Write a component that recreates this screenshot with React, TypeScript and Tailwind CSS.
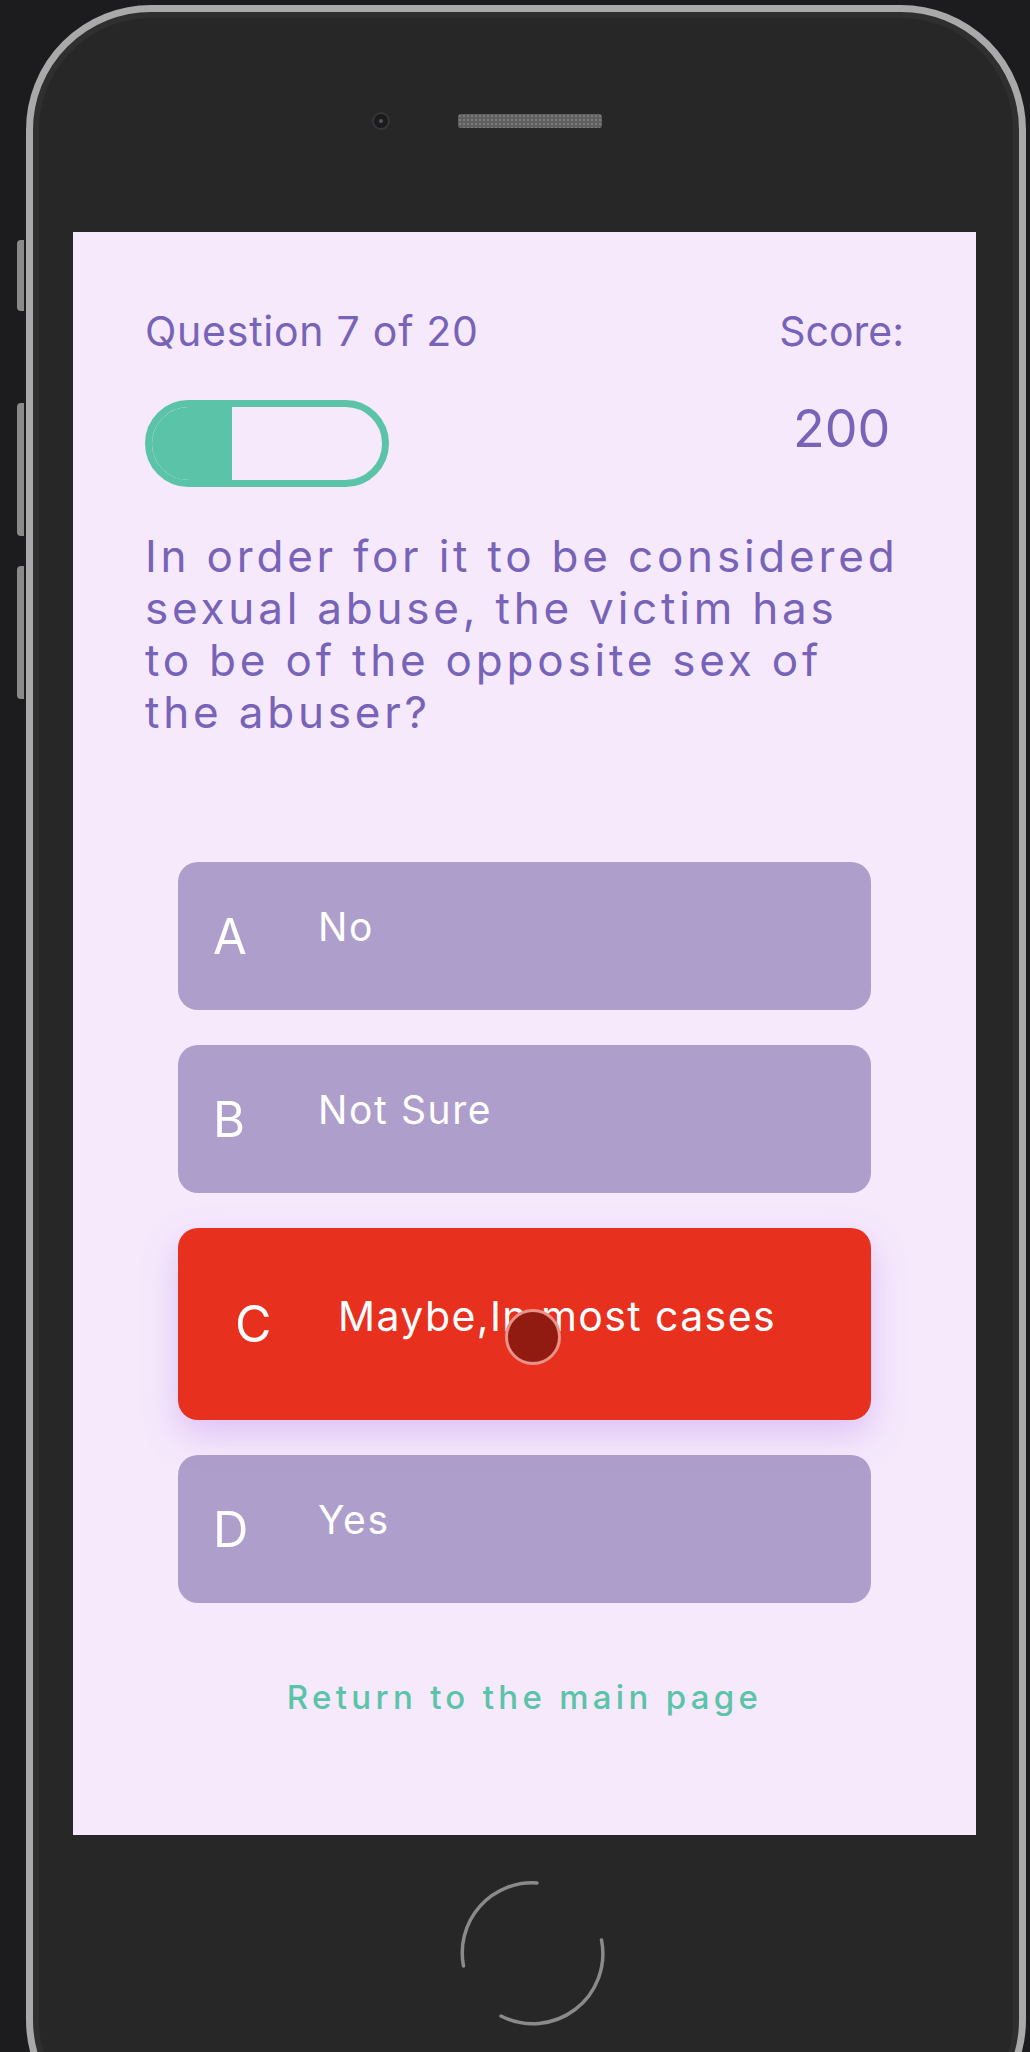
import React from "react";

const options = [
  { letter: "A", text: "No" },
  { letter: "B", text: "Not Sure" },
  { letter: "C", text: "Maybe,In most cases", selected: true },
  { letter: "D", text: "Yes" },
];

function HomeButton() {
  return (
    <svg width="150" height="150" viewBox="0 0 150 150" fill="none">
      <path d="M80 5 A70 70 0 0 0 6.5 88" stroke="#8a8a8a" strokeWidth="3.5" strokeLinecap="round" />
      <path d="M144.5 62 A70 70 0 0 1 44 138" stroke="#8a8a8a" strokeWidth="3.5" strokeLinecap="round" />
    </svg>
  );
}

function OptionCard({ letter, text, selected }: { letter: string; text: string; selected?: boolean }) {
  if (selected) {
    return (
      <div className="relative flex h-[192px] items-center rounded-[20px] bg-[#e8301f] pl-[57px] shadow-[0_14px_34px_rgba(178,120,235,0.35)]">
        <span className="w-[103px] text-[50px] leading-none text-white">{letter}</span>
        <span className="mb-[16px] text-[41px] leading-none tracking-[1.4px] text-white">{text}</span>
        {/* touch indicator */}
        <div className="absolute left-[327px] top-[81px] h-[56px] w-[56px] rounded-full border-[3px] border-[#e9928a] bg-[#921b11]" />
      </div>
    );
  }
  return (
    <div className="flex h-[148px] items-center rounded-[20px] bg-[#ae9ecb] pl-[35px]">
      <span className="w-[105px] text-[49px] leading-none text-white">{letter}</span>
      <span className="mb-[19px] text-[39px] leading-none tracking-[1.6px] text-white">{text}</span>
    </div>
  );
}

export default function App() {
  return (
    <div className="relative h-[2052px] w-[1030px] overflow-hidden bg-[#1c1c1e] pl-[26px] pt-[5px] font-['Inter',sans-serif]">
      {/* side buttons */}
      <div className="absolute left-[17px] top-[240px] h-[71px] w-[7px] rounded-l-sm bg-[#8a8a8a]" />
      <div className="absolute left-[17px] top-[403px] h-[133px] w-[7px] rounded-l-sm bg-[#8a8a8a]" />
      <div className="absolute left-[17px] top-[566px] h-[133px] w-[7px] rounded-l-sm bg-[#8a8a8a]" />

      <div className="flex h-[2140px] w-[1000px] flex-col rounded-[125px] border-[7px] border-[#a9a9a9] bg-[#272727] shadow-[inset_0_0_0_6px_#2f2f2f]">
        {/* top bezel */}
        <div className="flex h-[220px] items-center gap-[70px] pb-[2px] pl-[341px]">
          <div className="flex h-[14px] w-[14px] items-center justify-center rounded-full bg-[#1b1b1d] ring-2 ring-[#363636]">
            <div className="h-[4px] w-[4px] rounded-full bg-[#555]" />
          </div>
          <div className="h-[14px] w-[144px] rounded-[3px] bg-[#606060] bg-[radial-gradient(#7a7a7a_1px,transparent_1px)] bg-[length:4px_4px]" />
        </div>

        {/* screen */}
        <div className="ml-[40px] flex h-[1603px] w-[903px] flex-col bg-[#f6e9fc] px-[72px] pt-[79px] text-[#7763b7]">
          <div className="flex justify-between">
            <div className="flex flex-col gap-[48px]">
              <p className="text-[41px] leading-none tracking-[0.75px]">Question 7 of 20</p>
              <div className="h-[87px] w-[244px] overflow-hidden rounded-full border-[7px] border-[#5bc4a8]">
                <div className="h-full w-[80px] bg-[#5bc4a8]" />
              </div>
            </div>
            <div className="flex flex-col items-center gap-[51px]">
              <p className="text-[41px] leading-none">Score:</p>
              <p className="text-[52px] leading-none">200</p>
            </div>
          </div>

          <p className="mt-[43px] text-[44px] leading-[52px] tracking-[3.8px]">
            In order for it to be considered
            <br />
            sexual abuse, the victim has
            <br />
            to be of the opposite sex of
            <br />
            the abuser?
          </p>

          <div className="mx-[33px] mt-[124px] flex flex-col gap-[35px]">
            {options.map((o) => (
              <OptionCard key={o.letter} letter={o.letter} text={o.text} selected={o.selected} />
            ))}
          </div>

          <p className="mt-[78px] text-center text-[33px] font-medium leading-none tracking-[4.3px] text-[#5bc4a8]">
            Return to the main page
          </p>
        </div>

        {/* bottom bezel */}
        <div className="flex justify-center pl-[11px] pt-[43px]">
          <HomeButton />
        </div>
      </div>
    </div>
  );
}
